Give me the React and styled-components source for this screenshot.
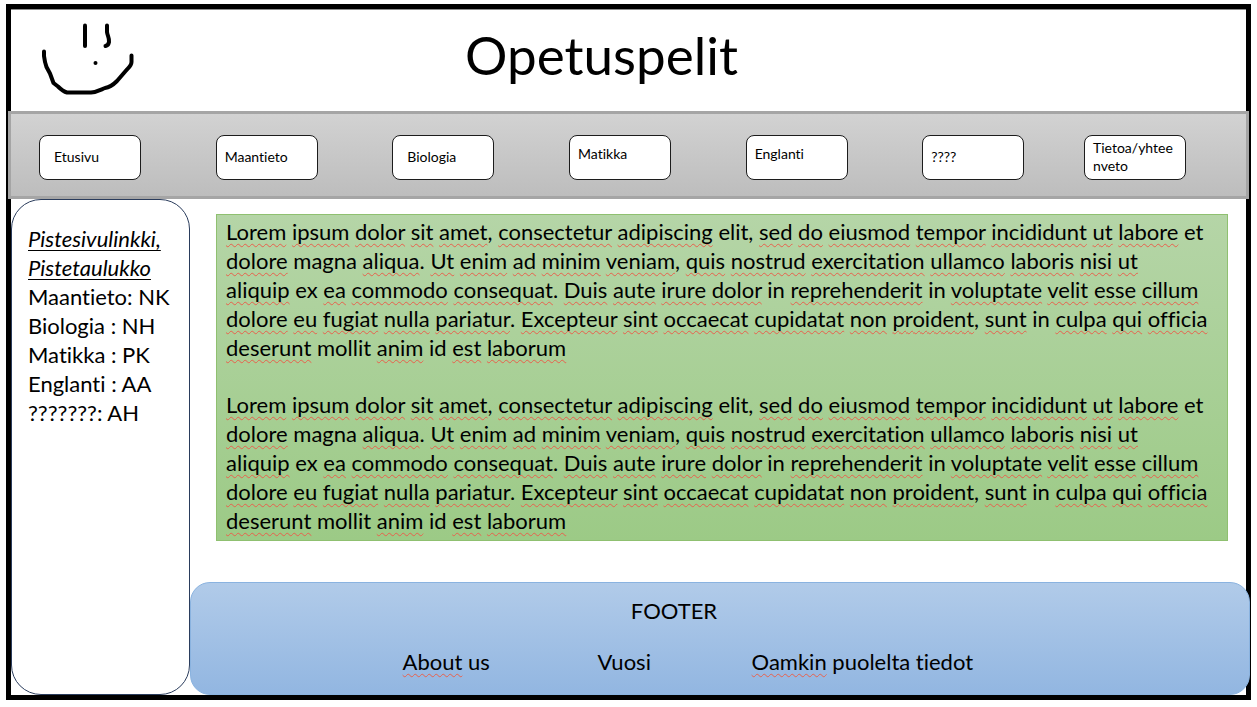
import React from "react";
import styled, { createGlobalStyle } from "styled-components";

const GlobalStyle = createGlobalStyle`
  *, *::before, *::after { box-sizing: border-box; }
  body {
    margin: 0;
    background: #fff;
    color: #000;
    font-family: Lato, "Open Sans", sans-serif;
    font-size: 22px;
    font-variant-ligatures: none;
    line-height: 29px;
  }
`;

const Page = styled.div`
  display: flex;
  flex-direction: column;
  min-height: 100vh;
  padding: 4px 6px 8px;
`;

const Frame = styled.div`
  flex: 1;
  display: flex;
  flex-direction: column;
  border: 5px solid #000;
`;

const Header = styled.header`
  display: grid;
  grid-template-columns: 124px 1fr 178px;
  height: 102px;
  border-top: 1px solid #8c8c8c;
`;

const Logo = styled.svg`
  width: 96px;
  height: 76px;
  margin: 12px 0 0 29px;
`;

const Title = styled.h1`
  margin: 0;
  font-size: 53px;
  font-weight: 400;
  line-height: 90px;
  text-align: center;
`;

const Nav = styled.nav`
  display: grid;
  grid-template-columns: repeat(5, 177fr) 162fr 102px;
  align-items: center;
  height: 88px;
  margin: 0 -3px;
  padding: 4px 60px 0 28px;
  border: 3px solid #a5a5a5;
  background: linear-gradient(#d2d2d2, #bdbdbd);
`;

const NavLink = styled.a`
  display: flex;
  align-items: center;
  width: 102px;
  height: 45px;
  padding: 0 8px ${(p) => (p.$raised ? "6px" : "0")} ${(p) => (p.$indented ? "14px" : "8px")};
  border: 1px solid #1c1c1c;
  border-radius: 8px;
  background: #fff;
  color: #000;
  font-size: 14px;
  line-height: 18px;
  text-decoration: none;
`;

const Body = styled.div`
  flex: 1;
  display: grid;
  grid-template-columns: 179px 1fr;
`;

const Sidebar = styled.aside`
  padding: 24px 0 0 16px;
  border: 1px solid #2a3c5c;
  border-radius: 30px;
  white-space: nowrap;
`;

const ScoreLink = styled.a`
  display: block;
  color: #000;
  font-style: italic;
  text-decoration: underline 1px;
  text-underline-offset: 3px;
  text-decoration-skip-ink: none;
`;

const ScoreList = styled.ul`
  margin: 0;
  padding: 0;
  list-style: none;
`;

const Main = styled.div`
  display: flex;
  flex-direction: column;
  justify-content: space-between;
  min-width: 0;
`;

const Article = styled.main`
  display: flex;
  flex-direction: column;
  gap: 28px;
  margin: 15px 18px 41px 26px;
  padding: 2px 8px 5px 9px;
  border: 1px solid #8fc070;
  background: linear-gradient(#b5d5a7, #9cca86);
  white-space: nowrap;
`;

const Paragraph = styled.p`
  margin: 0;
`;

const Misspelled = styled.span`
  text-decoration: underline wavy #e8604c 1px;
  text-underline-offset: 3px;
  text-decoration-skip-ink: none;
`;

const Footer = styled.footer`
  height: 113px;
  margin-right: -4px;
  padding-top: 13px;
  border: 1px solid #8ab3e0;
  border-radius: 20px;
  background: linear-gradient(#b1cbe9, #92b6e1);
`;

const FooterTitle = styled.h2`
  margin: 0 92px 22px 0;
  font-size: 22px;
  font-weight: 400;
  text-align: center;
`;

const FooterLinks = styled.div`
  display: grid;
  grid-template-columns: 195px 154px auto;
  padding-left: 20%;
`;

const FooterLink = styled.a`
  color: #000;
  text-decoration: none;
`;

const navItems = [
  { label: "Etusivu", indented: true },
  { label: "Maantieto" },
  { label: "Biologia", indented: true },
  { label: "Matikka", raised: true },
  { label: "Englanti", raised: true },
  { label: "????" },
  { label: <>Tietoa/yhtee<br />nveto</> },
];

const scores = [
  "Maantieto: NK",
  "Biologia : NH",
  "Matikka : PK",
  "Englanti : AA",
  "???????: AH",
];

const loremLines = [
  "Lorem ipsum dolor sit amet, consectetur adipiscing elit, sed do eiusmod tempor incididunt ut labore et",
  "dolore magna aliqua. Ut enim ad minim veniam, quis nostrud exercitation ullamco laboris nisi ut",
  "aliquip ex ea commodo consequat. Duis aute irure dolor in reprehenderit in voluptate velit esse cillum",
  "dolore eu fugiat nulla pariatur. Excepteur sint occaecat cupidatat non proident, sunt in culpa qui officia",
  "deserunt mollit anim id est laborum",
];

const knownWords = new Set(["elit", "et", "magna", "ex", "in", "mollit", "id"]);

function Lorem() {
  return (
    <Paragraph>
      {loremLines.map((line, i) => (
        <React.Fragment key={line}>
          {i > 0 && <br />}
          {line.split(/(\w+)/).map((part, j) =>
            /\w/.test(part) && !knownWords.has(part) ? (
              <Misspelled key={j}>{part}</Misspelled>
            ) : (
              part
            )
          )}
        </React.Fragment>
      ))}
    </Paragraph>
  );
}

function Smiley() {
  return (
    <Logo viewBox="40 22 96 76" fill="none" stroke="#000" strokeWidth="4" strokeLinecap="round" strokeLinejoin="round" role="img" aria-label="Hymiö">
      <path d="M85 25.500V46" />
      <path d="M107 25.500V32C107.500 36 109.500 38 109 42C108.500 44.500 107.500 45.500 105.500 46" />
      <path d="M44 51.500V56C44.500 60 45 63 46.500 67L50 73.500L53.500 83L58 86.500C61 89.500 63 91.500 67 92.500H91C97 92 101 89.500 105 88C109 87.500 113 85 117 81L126.500 70C129 67.500 131.500 65.500 131.500 62V55.500" />
      <circle cx="95.500" cy="63" r="2" fill="#000" stroke="none" />
    </Logo>
  );
}

export default function App() {
  return (
    <Page>
      <GlobalStyle />
      <Frame>
        <Header>
          <Smiley />
          <Title>Opetuspelit</Title>
        </Header>
        <Nav>
          {navItems.map((item, i) => (
            <NavLink key={i} href="#" $indented={item.indented} $raised={item.raised}>
              <span>{item.label}</span>
            </NavLink>
          ))}
        </Nav>
        <Body>
          <Sidebar>
            <ScoreLink href="#">
              Pistesivulinkki,
              <br />
              Pistetaulukko
            </ScoreLink>
            <ScoreList>
              {scores.map((score) => (
                <li key={score}>{score}</li>
              ))}
            </ScoreList>
          </Sidebar>
          <Main>
            <Article>
              <Lorem />
              <Lorem />
            </Article>
            <Footer>
              <FooterTitle>FOOTER</FooterTitle>
              <FooterLinks>
                <FooterLink href="#">
                  <Misspelled>About</Misspelled> us
                </FooterLink>
                <FooterLink href="#">Vuosi</FooterLink>
                <FooterLink href="#">
                  <Misspelled>Oamkin</Misspelled> puolelta tiedot
                </FooterLink>
              </FooterLinks>
            </Footer>
          </Main>
        </Body>
      </Frame>
    </Page>
  );
}
